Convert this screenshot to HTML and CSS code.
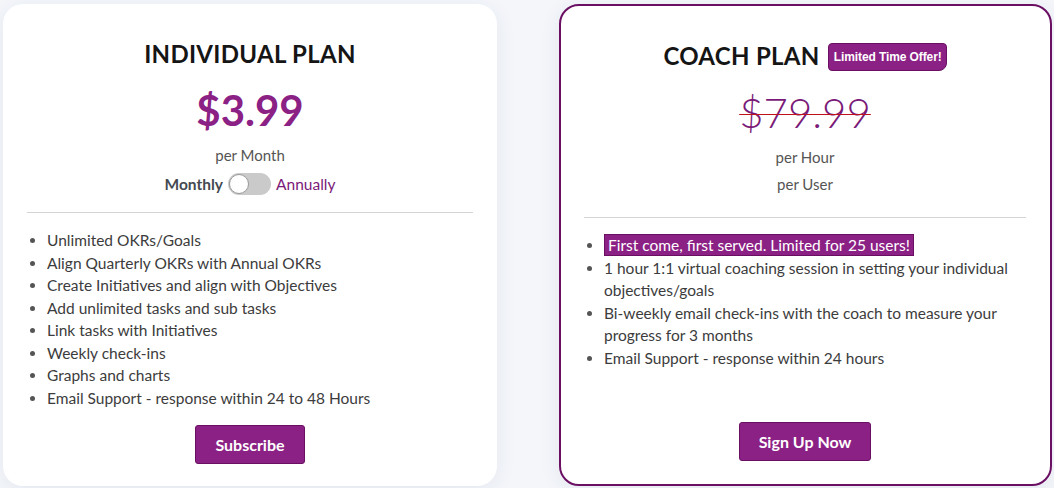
FILE: index.html
```html
<!DOCTYPE html>
<html lang="en">

<head>
    <meta charset="UTF-8">
    <meta name="viewport" content="width=device-width, initial-scale=1.0">
    <title>Plans</title>
    <link rel="stylesheet" href="styles.css">
</head>

<body>
    <div class="plans">
        <div class="plan-card">
            <h2 class="plan-title">INDIVIDUAL PLAN</h2>
            <div class="price">$3.99</div>
            <p class="period">per Month</p>
            <div class="billing-toggle">
                <span class="toggle-label">Monthly</span>
                <span class="switch"><span class="knob"></span></span>
                <span class="toggle-alt">Annually</span>
            </div>
            <hr class="divider">
            <ul class="features">
                <li>Unlimited OKRs/Goals</li>
                <li>Align Quarterly OKRs with Annual OKRs</li>
                <li>Create Initiatives and align with Objectives</li>
                <li>Add unlimited tasks and sub tasks</li>
                <li>Link tasks with Initiatives</li>
                <li>Weekly check-ins</li>
                <li>Graphs and charts</li>
                <li>Email Support - response within 24 to 48 Hours</li>
            </ul>
            <div class="action">
                <button class="btn">Subscribe</button>
            </div>
        </div>

        <div class="plan-card featured">
            <h2 class="plan-title">COACH PLAN <span class="badge">Limited Time Offer!</span></h2>
            <div class="price old-price">$79.99</div>
            <p class="period">per Hour</p>
            <p class="period">per User</p>
            <hr class="divider">
            <ul class="features">
                <li><span class="highlight">First come, first served. Limited for 25 users!</span></li>
                <li>1 hour 1:1 virtual coaching session in setting your individual objectives/goals</li>
                <li>Bi-weekly email check-ins with the coach to measure your progress for 3 months</li>
                <li>Email Support - response within 24 hours</li>
            </ul>
            <div class="action">
                <button class="btn">Sign Up Now</button>
            </div>
        </div>
    </div>
</body>

</html>
```

FILE: styles.css
```css
:root {
    --bg-page: #f4f6fa;
    --card-bg: #ffffff;
    --text-dark: #151515;
    --text-body: #3c3c3c;
    --text-muted: #555555;
    --purple: #8b2184;
    --purple-dark: #6b0f63;
    --purple-text: #7a1a78;
}

* {
    margin: 0;
    padding: 0;
    box-sizing: border-box;
    font-family: 'Lato', 'Noto Sans', sans-serif;
}

body {
    background-color: var(--bg-page);
    color: var(--text-body);
    padding: 4px 2px 0 3px;
    height: 488px;
    overflow: hidden;
}

.plans {
    display: flex;
    gap: 62px;
}

.plan-card {
    width: 494px;
    height: 482px;
    background-color: var(--card-bg);
    border-radius: 20px;
    box-shadow: 0 4px 20px rgba(40, 60, 110, 0.08);
    padding: 34px 24px 0;
    text-align: center;
}

.plan-card.featured {
    width: 493px;
    border: 2px solid var(--purple-dark);
    padding: 34px 24px 0 23px;
}

.plan-title {
    font-size: 24px;
    font-weight: 700;
    color: var(--text-dark);
    letter-spacing: 0.3px;
    line-height: 32px;
}

.badge {
    display: inline-block;
    vertical-align: 4px;
    background-color: var(--purple);
    border: 1px solid var(--purple-dark);
    border-radius: 4px 4px 8px 4px;
    color: #fff;
    font-family: 'Liberation Sans', Arial, sans-serif;
    font-size: 12px;
    font-weight: 700;
    letter-spacing: -0.1px;
    line-height: 14px;
    padding: 6px 4px 6px 5px;
    margin-left: 2px;
}

.price {
    font-size: 42px;
    font-weight: 700;
    color: var(--purple);
    line-height: 50px;
    margin-top: 15px;
}

.old-price {
    font-weight: 300;
    color: var(--purple-text);
    text-decoration: line-through;
    text-decoration-color: #c0121b;
    text-decoration-thickness: 1px;
}

.period {
    font-size: 15px;
    color: var(--text-muted);
    line-height: 27px;
    margin-top: 7px;
}

.period + .period {
    margin-top: 0;
}

.billing-toggle {
    display: flex;
    justify-content: center;
    align-items: center;
    gap: 5px;
    font-size: 15.5px;
    line-height: 22px;
    margin-top: 4px;
}

.toggle-label {
    font-weight: 700;
    color: #454a52;
}

.toggle-alt {
    color: var(--purple-text);
}

.switch {
    width: 43px;
    height: 22px;
    background-color: #cacaca;
    border-radius: 11px;
    padding: 1px;
    display: flex;
}

.knob {
    width: 20px;
    height: 20px;
    background-color: #fff;
    border: 1px solid #999;
    border-radius: 50%;
}

.divider {
    border: none;
    border-top: 1px solid #d4d4d4;
    margin-top: 17px;
}

.featured .divider {
    margin-top: 19px;
}

.features {
    text-align: left;
    font-size: 15.5px;
    line-height: 22.5px;
    padding-left: 20px;
    margin-top: 16px;
    color: var(--text-body);
}

.featured .features {
    padding-left: 20px;
    margin-top: 16px;
}

.features li::marker {
    color: #555;
}

.highlight {
    background-color: var(--purple);
    color: #fff;
    padding: 1px 3px;
    border: 1px solid var(--purple-dark);
}

.action {
    margin-top: 16px;
}

.featured .action {
    margin-top: 53px;
}

.btn {
    background-color: var(--purple);
    border: 1px solid var(--purple-dark);
    border-radius: 3px;
    color: #fff;
    font-size: 16px;
    font-weight: 700;
    padding: 9px 19px;
    cursor: pointer;
}
```
